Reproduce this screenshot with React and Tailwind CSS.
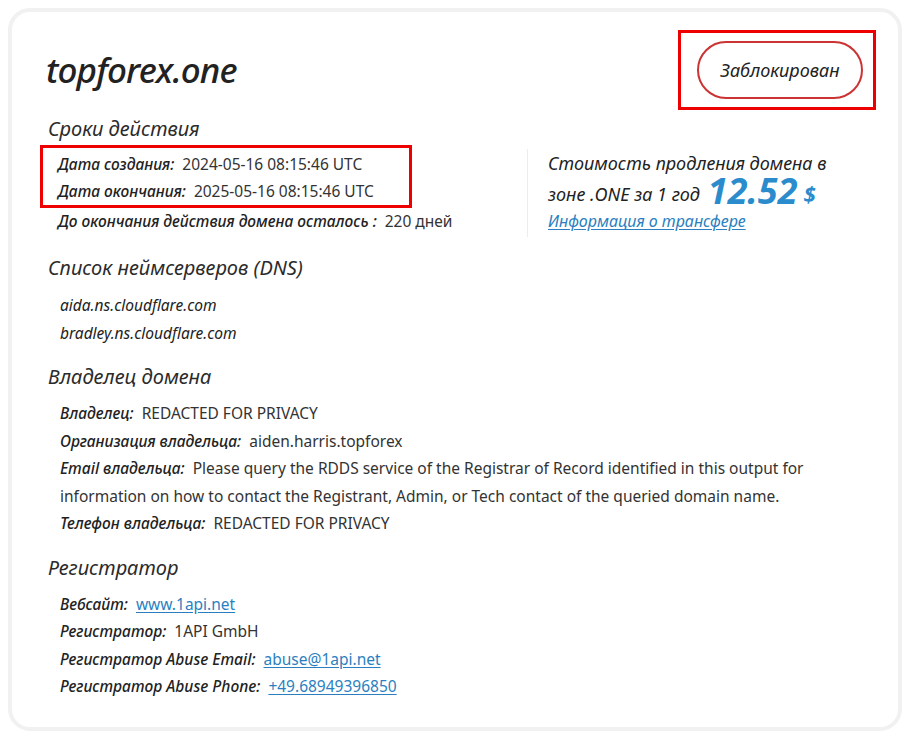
import React from 'react';

const Row = ({ label, children, h = 'h-[27.5px] leading-[27.5px]' }) => (
  <div className={`flex items-baseline ${h}`}>
    <span className="italic font-medium text-[#222]">{label}:</span>
    <span className="ml-2 text-[#333]">{children}</span>
  </div>
);

const Heading = ({ children, className = '' }) => (
  <h2 className={`text-[20px] italic text-[#2b2b2b] leading-7 ${className}`}>{children}</h2>
);

const A = ({ children }) => (
  <a href="#" className="text-[#2b7fc0] underline underline-offset-2">{children}</a>
);

export default function App() {
  return (
    <div className="min-h-screen bg-white p-2 font-['Noto_Sans',sans-serif] text-[15.5px]">
      <div className="rounded-[22px] border-4 border-[#f1f1f1] pl-[34px] pr-[22px] pt-[18px] pb-[26px]">
        {/* header */}
        <div className="flex justify-between items-start">
          <h1 className="mt-[18px] text-[35px] leading-[44px] italic font-medium text-[#222] tracking-tight">
            topforex.one
          </h1>
          <div className="border-[3px] border-[#ee0000] pl-[16px] pr-[10px] py-[8px]">
            <div className="h-[58px] w-[166px] rounded-full border-2 border-[#cc3333] flex items-center justify-center italic text-[18px] text-[#222]">
              Заблокирован
            </div>
          </div>
        </div>

        {/* Сроки действия */}
        <Heading className="mt-[5px] ml-[2px]">Сроки действия</Heading>
        <div className="flex mt-[2px]">
          <div className="w-[481px] shrink-0">
            <div className="w-[372px] -ml-[6px] border-[3px] border-[#ee0000] pl-[15px] pt-[3px]">
              <Row label="Дата создания" h="h-[27px] leading-[27px]">2024-05-16 08:15:46 UTC</Row>
              <Row label="Дата окончания" h="h-[27px] leading-[27px]">2025-05-16 08:15:46 UTC</Row>
            </div>
            <div className="pl-[12px]">
              <Row label="До окончания действия домена осталось " h="h-[27px] leading-[27px]">220 дней</Row>
            </div>
          </div>
          <div className="border-l border-[#ececec] mt-1 pl-5 h-[88px]">
            <div className="italic text-[18px] text-[#222] leading-[28px]">Стоимость продления домена в</div>
            <div className="italic text-[18px] text-[#222] h-[30px] flex items-end">
              <span className="leading-[26px]">зоне .ONE за 1 год</span>
              <span className="ml-2 text-[36px] leading-[32px] font-bold text-[#2a8ccc]">12.52</span>
              <span className="ml-1.5 text-[22px] leading-[28px] font-bold text-[#2a8ccc]">$</span>
            </div>
            <a href="#" className="block italic text-[16px] text-[#2b7fc0] underline underline-offset-2 leading-[28px]">
              Информация о трансфере
            </a>
          </div>
        </div>

        {/* DNS */}
        <Heading className="mt-[17px] ml-[2px]">Список неймсерверов (DNS)</Heading>
        <div className="pl-[14px] mt-[9px] italic text-[#222]">
          <div className="leading-[28px]">aida.ns.cloudflare.com</div>
          <div className="leading-[28px]">bradley.ns.cloudflare.com</div>
        </div>

        {/* Owner */}
        <Heading className="mt-[16px] ml-[2px]">Владелец домена</Heading>
        <div className="pl-[14px] mt-[9px]">
          <Row label="Владелец">REDACTED FOR PRIVACY</Row>
          <Row label="Организация владельца">aiden.harris.topforex</Row>
          <p className="leading-[27.5px] text-[#333] pr-[50px]">
            <span className="italic font-medium text-[#222] mr-2">Email владельца:</span>
            Please query the RDDS service of the Registrar of Record identified in this output for information on how to contact the Registrant, Admin, or Tech contact of the queried domain name.
          </p>
          <Row label="Телефон владельца">REDACTED FOR PRIVACY</Row>
        </div>

        {/* Registrar */}
        <Heading className="mt-[16px] ml-[2px]">Регистратор</Heading>
        <div className="pl-[14px] mt-[9px]">
          <Row label="Вебсайт"><A>www.1api.net</A></Row>
          <Row label="Регистратор">1API GmbH</Row>
          <Row label="Регистратор Abuse Email"><A>abuse@1api.net</A></Row>
          <Row label="Регистратор Abuse Phone"><A>+49.68949396850</A></Row>
        </div>
      </div>
    </div>
  );
}
